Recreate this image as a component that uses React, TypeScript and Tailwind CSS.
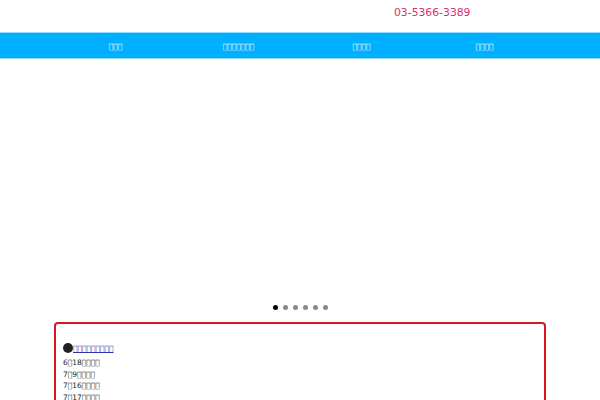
const T = "\uE000";
const tofu = (n: number) => T.repeat(n);

const navItems = [tofu(3), tofu(7), tofu(4), tofu(4)];

const news = [
  `6${T}18${tofu(4)}`,
  `7${T}9${tofu(4)}`,
  `7${T}16${tofu(4)}`,
  `7${T}17${tofu(4)}`,
];

export default function App() {
  return (
    <div className="w-[600px] h-[400px] overflow-hidden bg-white font-['DejaVu_Sans',sans-serif]">
      {/* Header */}
      <div className="h-[32px] flex">
        <div className="w-[394px]" />
        <div className="pt-[6px] text-[10.8px] leading-[14px] text-[#d6336c]">
          03-5366-3389
        </div>
      </div>

      {/* Global nav */}
      <div className="border-y border-[#8fdcff] bg-[#00b0ff]">
        <div className="mx-auto w-[492px] h-[25px] pt-[2px] grid grid-cols-4 items-center text-white text-[7.5px]">
          {navItems.map((t, i) => (
            <div key={i} className="text-center">
              {t}
            </div>
          ))}
        </div>
      </div>

      {/* Slider */}
      <div className="h-[246px]" />
      <div className="flex justify-center gap-[5px] pl-[1px]">
        {[0, 1, 2, 3, 4, 5].map((i) => (
          <span
            key={i}
            className={`w-[5px] h-[5px] rounded-full ${i === 0 ? "bg-black" : "bg-[#888]"}`}
          />
        ))}
      </div>

      {/* News box */}
      <div className="mx-auto mt-[12px] w-[492px] h-[120px] rounded-[4px] border-2 border-[#d4181f] px-[7px] pt-[19px]">
        <div className="flex items-end">
          <span className="w-[10px] h-[10px] rounded-full bg-[#222] mb-[1px]" />
          <a className="text-[7.5px] leading-[10px] text-[#3333aa] underline">{tofu(9)}</a>
        </div>
        <div className="mt-[3px] text-[7.5px] leading-[11.5px] text-[#222]">
          {news.map((n, i) => (
            <div key={i}>{n}</div>
          ))}
        </div>
      </div>
    </div>
  );
}
